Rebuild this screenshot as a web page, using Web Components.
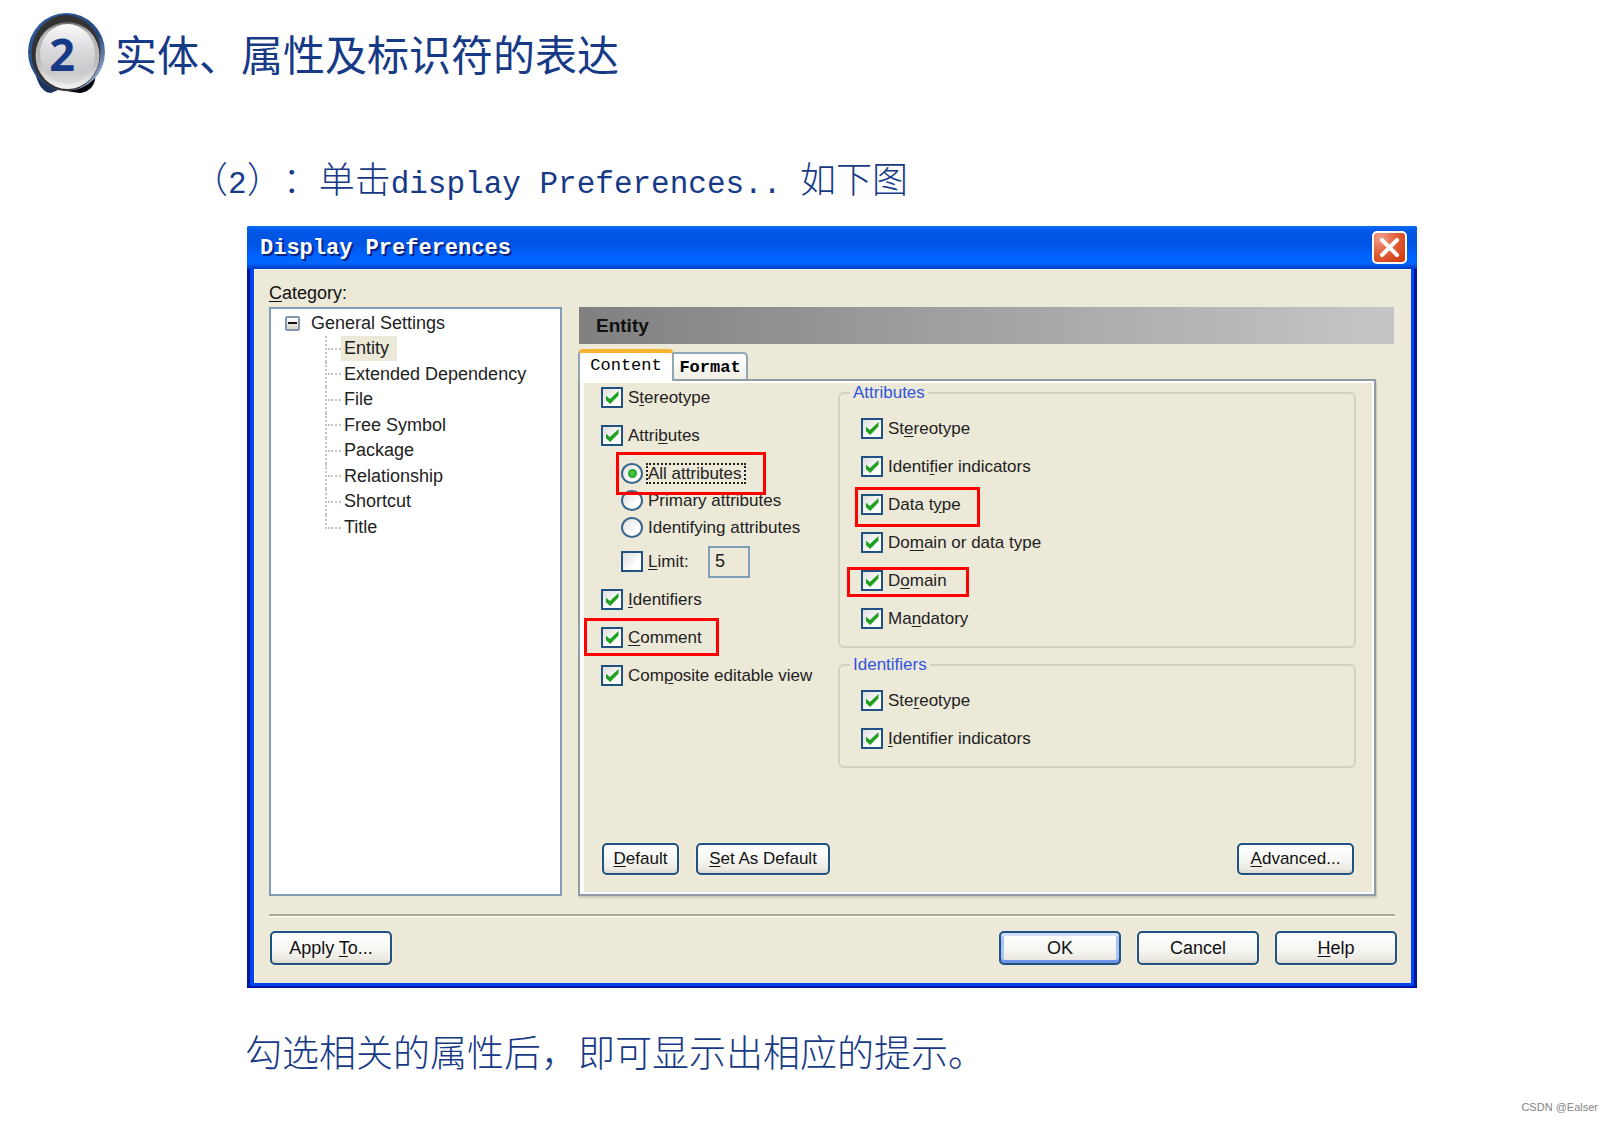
<!DOCTYPE html>
<html lang="zh-CN">
<head>
<meta charset="utf-8">
<title>实体、属性及标识符的表达</title>
<style>
  body { margin: 0; background: #fff; color: #173a87; font-family: "Liberation Sans", Arial, "Noto Sans CJK SC", sans-serif; }
</style>
</head>
<body>
<slide-page>
  <slide-heading number="2">实体、属性及标识符的表达</slide-heading>
  <slide-line>（<span class="latin">2</span>）：单击<span class="latin">display Preferences.. </span>如下图</slide-line>

  <xp-dialog heading="Display Preferences">
    <xp-tree slot="tree"></xp-tree>
    <xp-tabs slot="main" heading="Entity">
      <xp-stack slot="left">
        <xp-check checked>S<u>t</u>ereotype</xp-check>
        <xp-check checked>Attri<u>b</u>utes</xp-check>
        <xp-stack class="radios">
          <xp-check kind="radio" checked focused style="--mark:-11px auto auto -5px;--mark-w:150px;--mark-h:43px" mark>All attributes</xp-check>
          <xp-check kind="radio">Primary attributes</xp-check>
          <xp-check kind="radio">Identifying attributes</xp-check>
          <xp-limit></xp-limit>
        </xp-stack>
        <xp-check checked><u>I</u>dentifiers</xp-check>
        <xp-check checked mark style="--mark:-9px auto auto -17px;--mark-w:135px;--mark-h:38px"><u>C</u>omment</xp-check>
        <xp-check checked>Com<u>p</u>osite editable view</xp-check>
      </xp-stack>
      <xp-group slot="right" legend="Attributes">
        <xp-check checked>St<u>e</u>reotype</xp-check>
        <xp-check checked>Identi<u>f</u>ier indicators</xp-check>
        <xp-check checked mark style="--mark:-7px auto auto -6px;--mark-w:125px;--mark-h:40px">Data t<u>y</u>pe</xp-check>
        <xp-check checked>Do<u>m</u>ain or data type</xp-check>
        <xp-check checked mark style="--mark:-3px auto auto -14px;--mark-w:122px;--mark-h:30px">D<u>o</u>main</xp-check>
        <xp-check checked>Ma<u>n</u>datory</xp-check>
      </xp-group>
      <xp-group slot="right" legend="Identifiers">
        <xp-check checked>Ste<u>r</u>eotype</xp-check>
        <xp-check checked><u>I</u>dentifier indicators</xp-check>
      </xp-group>
      <xp-button slot="actions" style="--w:77px"><u>D</u>efault</xp-button>
      <xp-button slot="actions" style="--w:134px"><u>S</u>et As Default</xp-button>
      <xp-button slot="actions" class="end" style="--w:117px"><u>A</u>dvanced...</xp-button>
    </xp-tabs>
    <xp-button slot="footer" class="start" size="large">Apply <u>T</u>o...</xp-button>
    <xp-button slot="footer" size="large" primary>OK</xp-button>
    <xp-button slot="footer" size="large">Cancel</xp-button>
    <xp-button slot="footer" size="large"><u>H</u>elp</xp-button>
  </xp-dialog>

  <slide-line class="closing">勾选相关的属性后，即可显示出相应的提示。</slide-line>
  <slide-credit>CSDN @Ealser</slide-credit>
</slide-page>

<script>
function define(name, render) {
  customElements.define(name, class extends HTMLElement {
    constructor() {
      super();
      this.attachShadow({ mode: 'open' });
    }
    connectedCallback() {
      this.shadowRoot.innerHTML = render(this);
    }
  });
}

define('slide-page', () => `
  <style>
    :host { display: flex; flex-direction: column; padding: 13px 0 6px; }
    ::slotted(slide-heading) { margin-left: 28px; }
    ::slotted(slide-line) { margin: 62px 0 27px 192px; }
    ::slotted(xp-dialog) { margin: 0 195px 0 247px; }
    ::slotted(slide-line.closing) { margin: 41px 0 26px 245px; font-size: 37px; }
    ::slotted(slide-credit) { align-self: flex-end; margin-right: 14px; }
  </style>
  <slot></slot>`);

define('slide-heading', el => `
  <style>
    :host { display: flex; align-items: center; gap: 10px; }
    h1 { margin: 0; font: 400 42px/60px "Noto Sans CJK SC", sans-serif; }
    svg { display: block; width: 77px; height: 80px; flex: none; }
    text { font: 700 45px "Open Sans", "Liberation Sans", sans-serif; fill: #173a87; }
  </style>
  <svg viewBox="0 0 77 80" role="img" aria-label="${el.getAttribute('number')}">
    <defs>
      <linearGradient id="rim" x1="0" y1="0" x2="1" y2="1">
        <stop offset="0" stop-color="#2a5c9c"/><stop offset=".6" stop-color="#27497c"/><stop offset="1" stop-color="#c3d2e8"/>
      </linearGradient>
      <linearGradient id="face" x1="0" y1="0" x2="0" y2="1">
        <stop offset="0" stop-color="#fafafa"/><stop offset=".45" stop-color="#d9d9dc"/><stop offset=".8" stop-color="#c9c9cb"/><stop offset="1" stop-color="#ddd"/>
      </linearGradient>
      <linearGradient id="edge" x1="0" y1="0" x2="0" y2="1">
        <stop offset="0" stop-color="#666"/><stop offset=".15" stop-color="#b4b4b4"/><stop offset=".6" stop-color="#bbb"/><stop offset="1" stop-color="#f5f5f5"/>
      </linearGradient>
    </defs>
    <path d="M6 56C9 69 14 80 23 80L30 77L30 60Z" fill="#1b335d"/>
    <path d="M67 60C69 71 61 80 51 80L38 78L46 66Z" fill="#05070c"/>
    <ellipse cx="38.500" cy="39" rx="38.500" ry="39" fill="url(#rim)"/>
    <ellipse cx="38" cy="40" rx="34.500" ry="38" fill="#333"/>
    <ellipse cx="39.500" cy="42.500" rx="32" ry="33.500" fill="url(#edge)"/>
    <ellipse cx="39.500" cy="41" rx="27.500" ry="30" fill="url(#face)"/>
    <text x="34" y="58" text-anchor="middle">${el.getAttribute('number')}</text>
  </svg>
  <h1><slot></slot></h1>`);

define('slide-line', () => `
  <style>
    :host { display: block; font: 300 36px/44px "Noto Sans CJK SC", sans-serif; text-spacing-trim: space-all; }
    p { margin: 0; font-size: inherit; }
    ::slotted(.latin) { font: 400 31px/0 "Liberation Mono", monospace; white-space: pre; }
  </style>
  <p><slot></slot></p>`);

define('slide-credit', () => `
  <style>:host { display: block; font: 11px/16px "Liberation Sans", sans-serif; color: #858585; }</style>
  <slot></slot>`);

define('xp-dialog', el => `
  <style>
    :host { display: block; color: #111; font: 18px/20px "Liberation Sans", sans-serif; }
    section {
      border: solid #0014a8; border-width: 0 3px 2px 3px;
      background: #ece9d8;
      border-radius: 2px 2px 0 0;
    }
    header {
      display: flex; align-items: center; justify-content: space-between;
      height: 43px; margin: 0 -3px; padding: 0 10px 0 13px; box-sizing: border-box;
      background: linear-gradient(#0a6cf5 0, #0055e5 6px, #0054e3 18px, #0062ff 30px, #0068ff 37px, #0048d8 41px, #0038c0 43px);
      border-radius: 2px 2px 0 0;
    }
    h2 { margin: 0; padding-top: 2px; font: 700 22px/28px "Liberation Mono", monospace; color: #fff; text-shadow: 2px 2px 0 #0a2480; }
    .close {
      display: block; width: 35px; height: 33px; padding: 0; border: 2px solid #fff; border-radius: 5px;
      background: radial-gradient(circle at 20% 15%, #f0a18c, #e2603c 45%, #d23c10 90%);
    }
    .close svg { display: block; margin: auto; width: 21px; height: 21px; }
    .body { padding: 14px 14px 18px 15px; border: solid #0046ec; border-width: 0 3px 3px 4px; box-shadow: inset 1px 1px #fbf4dc; }
    .label { margin-bottom: 4px; }
    .cols { display: grid; grid-template-columns: 293px minmax(0, 1fr); gap: 16px; }
    hr { margin: 18px 2px 0 0; border: 0; border-top: 2px solid #aca899; border-bottom: 1px solid #fff; }
    footer { display: flex; gap: 16px; padding: 14px 0 0 1px; }
    ::slotted(.start) { margin-right: auto; }
    u { text-underline-offset: 2px; }
  </style>
  <section role="dialog" aria-label="${el.getAttribute('heading')}">
    <header>
      <h2>${el.getAttribute('heading')}</h2>
      <button class="close" aria-label="Close"><svg viewBox="0 0 21 21"><path d="M3 3L18 18M18 3L3 18" stroke="#fff" stroke-width="4" stroke-linecap="round"/></svg></button>
    </header>
    <div class="body">
      <div class="label"><u>C</u>ategory:</div>
      <div class="cols"><slot name="tree"></slot><slot name="main"></slot></div>
      <hr>
      <footer><slot name="footer"></slot></footer>
    </div>
  </section>`);

define('xp-tree', () => {
  const items = ['Entity', 'Extended Dependency', 'File', 'Free Symbol', 'Package', 'Relationship', 'Shortcut', 'Title'];
  return `
  <style>
    :host { display: block; box-sizing: border-box; height: 589px; border: 2px solid #7f9db9; background: #fff; color: #222; }
    .root { display: flex; align-items: center; gap: 11px; height: 26px; padding: 1px 0 0 14px; }
    .toggle { width: 15px; height: 15px; padding: 0; border: 2px solid #8396ad; border-radius: 2px; background: linear-gradient(#fff, #d6d2c4); display: grid; place-items: center; }
    .toggle::before { content: ""; width: 9px; height: 2px; background: #111; }
    ul { list-style: none; margin: 0 0 0 54px; padding: 0; height: 204px; display: grid; grid-auto-rows: 1fr; }
    li { display: flex; align-items: center; }
    .twig { align-self: stretch; width: 14px; border-left: 2px dotted #c4c4c4; display: flex; align-items: center; }
    .twig::after { content: ""; flex: 1; margin-left: 1px; border-top: 2px dotted #c4c4c4; }
    li:last-child .twig { height: 14px; align-items: flex-end; }
    .name { padding: 0 8px 0 3px; line-height: 25px; }
    .selected { background: #ece9d8; }
  </style>
  <div class="root"><button class="toggle" aria-label="Collapse"></button><span>General Settings</span></div>
  <ul>${items.map((t, i) => `<li><span class="twig"></span><span class="name${i ? '' : ' selected'}">${t}</span></li>`).join('')}</ul>`;
});

define('xp-tabs', el => `
  <style>
    :host { display: flex; flex-direction: column; min-width: 0; font-size: 17px; }
    h3 { margin: 0 3px 5px 1px; padding: 0 17px; font: 700 19px/37px "Liberation Sans", sans-serif; color: #111; background: linear-gradient(90deg, #808080, #c6c6c6); }
    .tabs { display: flex; align-items: flex-end; height: 30px; }
    .tabs button {
      box-sizing: border-box; padding: 2px 0 0; color: #000; font: 700 17px/22px "Liberation Mono", monospace;
      border: 2px solid #91a7b4; border-bottom: 0; border-left: 0; border-radius: 0 5px 0 0; background: linear-gradient(#fff, #f0efe6);
      width: 74px; height: 27px;
    }
    .tabs .on { position: relative; width: 96px; height: 32px; margin-bottom: -2px; padding: 0 0 2px; border: 2px solid #91a7b4; border-top: 4px solid #fbb32f; border-bottom: 0; border-radius: 5px 5px 0 0; background: #fff; font-weight: 400; }
    .panel {
      flex: 1; display: flex; flex-direction: column; justify-content: space-between; margin-right: 21px;
      border: 2px solid #919ba5; box-shadow: inset 4px 0 #fcfcfa, inset -2px 0 #fff, inset 0 2px #fff, inset 0 -2px #fff, 1px 2px 1px #d0cebf;
      padding: 2px 18px 19px 21px;
    }
    .cols { display: grid; grid-template-columns: 237px minmax(0, 1fr); }
    .left { padding-top: 4px; }
    .right { display: flex; flex-direction: column; gap: 7px; }
    .actions { display: flex; gap: 17px; padding: 0 2px 0 1px; }
    ::slotted(.end) { margin-left: auto; }
  </style>
  <h3>${el.getAttribute('heading')}</h3>
  <div class="tabs" role="tablist"><button class="on" role="tab" aria-selected="true">Content</button><button role="tab" aria-selected="false">Format</button></div>
  <div class="panel" role="tabpanel">
    <div class="cols"><div class="left"><slot name="left"></slot></div><div class="right"><slot name="right"></slot></div></div>
    <div class="actions"><slot name="actions"></slot></div>
  </div>`);

define('xp-stack', () => `
  <style>
    :host { display: flex; flex-direction: column; gap: 17px; }
    :host(.radios) { gap: 6px; padding-left: 20px; }
  </style>
  <slot></slot>`);

define('xp-group', el => `
  <style>
    :host { display: block; }
    fieldset { margin: 0; padding: 0 10px 17px; border: 2px solid #d0d0bf; border-radius: 6px; min-width: 0; }
    legend { padding: 0 3px; color: #2f55dc; line-height: 20px; }
    div { display: flex; flex-direction: column; gap: 17px; padding: 15px 0 0 11px; }
  </style>
  <fieldset><legend>${el.getAttribute('legend')}</legend><div><slot></slot></div></fieldset>`);

const boxCss = `
  label { display: inline-flex; align-items: center; gap: 3px; white-space: nowrap; }
  input[type=checkbox], input[type=radio] {
    appearance: none; flex: none; box-sizing: border-box; margin: 0; width: 22px; height: 21px;
    border: 2px solid #1f5282; background: linear-gradient(135deg, #dededa, #fff 70%); display: grid; place-items: center;
  }
  input[type=radio] { border-radius: 50%; border-color: #3b668e; }
  input[type=checkbox]:checked::before { content: ""; width: 13px; height: 13px; background: #21a121; clip-path: polygon(0 32%, 34% 62%, 100% 0, 100% 34%, 36% 100%, 0 68%); }
  input[type=radio]:checked::before { content: ""; width: 9px; height: 9px; border-radius: 50%; background: radial-gradient(#4fd04f, #158c15); }
  .text { padding: 0 2px; line-height: 21px; }
  ::slotted(u), u { text-underline-offset: 2px; }`;

define('xp-check', el => `
  <style>
    :host { display: flex; position: relative; height: 21px; color: #222; }
    ${boxCss}
    .focused { outline: 2px dotted #222; outline-offset: -2px; padding: 0 4px 0 2px; }
    .mark { position: absolute; inset: var(--mark); width: var(--mark-w); height: var(--mark-h); box-sizing: border-box; border: 3px solid #f00; z-index: 1; pointer-events: none; }
  </style>
  <label><input type="${el.getAttribute('kind') || 'checkbox'}"${el.hasAttribute('checked') ? ' checked' : ''}><span class="text${el.hasAttribute('focused') ? ' focused' : ''}"><slot></slot></span></label>
  ${el.hasAttribute('mark') ? '<span class="mark"></span>' : ''}`);

define('xp-limit', () => `
  <style>
    :host { display: flex; align-items: center; justify-content: flex-start; height: 21px; margin-top: 7px; color: #222; }
    ${boxCss}
    label { width: 87px; }
    .num { box-sizing: border-box; width: 42px; height: 32px; padding: 0 5px; border: 2px solid #7f9db9; background: #ece9d8; font: 18px "Liberation Sans", sans-serif; color: #222; }
  </style>
  <label><input type="checkbox"><span class="text"><u>L</u>imit:</span></label>
  <input class="num" type="text" value="5" aria-label="Limit">`);

define('xp-button', () => `
  <style>
    :host { display: block; }
    button {
      box-sizing: border-box; width: var(--w, auto); height: 32px; padding: 0; white-space: nowrap;
      border: 2px solid #1f5282; border-radius: 5px; color: #111; font: 17px/20px "Liberation Sans", sans-serif;
      background: linear-gradient(#fff, #f4f4f0 60%, #eceae2 85%, #dcd8cc); box-shadow: 0 0 0 1px #f5f0dc;
    }
    :host([size=large]) button { width: 122px; height: 34px; font-size: 18px; }
    :host([primary]) button { box-shadow: inset 0 3px #cfe0fc, inset 0 -3px #6f93e6, inset 3px 0 #a9c3f5, inset -3px 0 #a9c3f5; }
    ::slotted(u) { text-underline-offset: 2px; }
  </style>
  <button><slot></slot></button>`);
</script>
</body>
</html>
